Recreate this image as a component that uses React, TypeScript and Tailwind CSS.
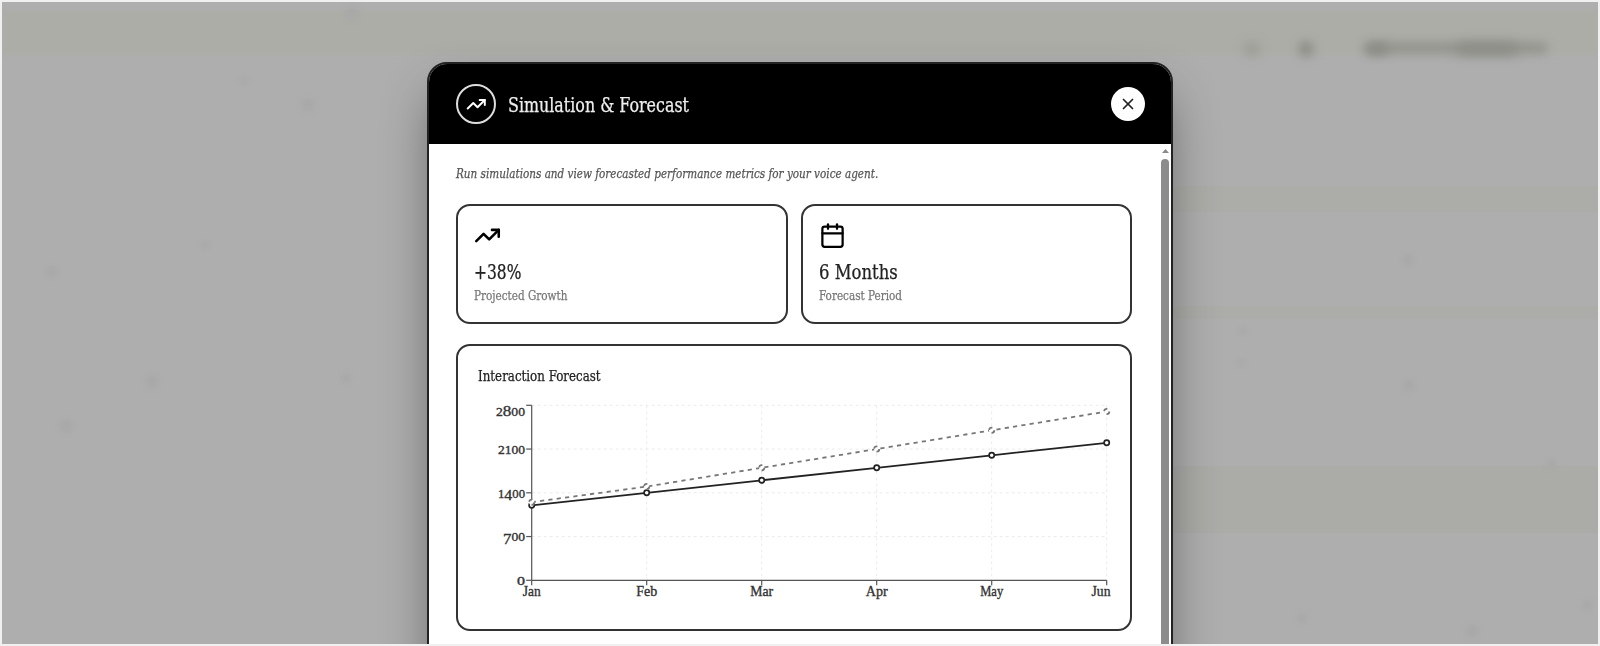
import type { ReactNode } from "react";
import { Calendar, TrendingUp, X } from "lucide-react";
import { clsx } from "clsx";

type Point = { month: string; current: number; projected: number };

const DATA: Point[] = [
  { month: "Jan", current: 1200, projected: 1250 },
  { month: "Feb", current: 1400, projected: 1500 },
  { month: "Mar", current: 1600, projected: 1800 },
  { month: "Apr", current: 1800, projected: 2100 },
  { month: "May", current: 2000, projected: 2400 },
  { month: "Jun", current: 2200, projected: 2700 },
];

const Y_TICKS = [
  { value: 0, width: 8 },
  { value: 700, width: 22 },
  { value: 1400, width: 27 },
  { value: 2100, width: 27 },
  { value: 2800, width: 29 },
];

const MONTH_WIDTHS = [18, 21, 23, 22, 23, 19];

const PLOT = { left: 53.7, right: 628.7, top: 10.3, bottom: 185.3 };

const xAt = (i: number) =>
  PLOT.left + (i * (PLOT.right - PLOT.left)) / (DATA.length - 1);
const yAt = (v: number) =>
  PLOT.bottom - (v / 2800) * (PLOT.bottom - PLOT.top);

const toPoints = (key: "current" | "projected") =>
  DATA.map((d, i) => `${xAt(i)},${yAt(d[key])}`).join(" ");

// Old-style figures: 0-2 sit at x-height, 4 and 7 hang below the baseline.
function OldStyleNumber({ value }: { value: number }) {
  let shift = 0;
  return (
    <>
      {String(value)
        .split("")
        .map((digit, i) => {
          const target = digit === "4" || digit === "7" ? 2.5 : 0;
          const dy = target - shift;
          shift = target;
          return (
            <tspan key={i} dy={dy} fontSize={"012".includes(digit) ? 12 : 15}>
              {digit}
            </tspan>
          );
        })}
    </>
  );
}

function ForecastChart() {
  return (
    <svg
      width="640"
      height="215"
      viewBox="0 0 640 215"
      className="block font-['Liberation_Serif',serif]"
    >
      <g stroke="#ececec" strokeDasharray="3 3">
        {Y_TICKS.map((t) => (
          <line key={t.value} x1={PLOT.left} x2={PLOT.right} y1={yAt(t.value)} y2={yAt(t.value)} />
        ))}
        {DATA.map((d, i) => (
          <line key={d.month} x1={xAt(i)} x2={xAt(i)} y1={PLOT.top} y2={PLOT.bottom} />
        ))}
      </g>

      <g stroke="#555" strokeWidth="1.2">
        <line x1={PLOT.left} x2={PLOT.left} y1={PLOT.top} y2={PLOT.bottom} />
        <line x1={PLOT.left} x2={PLOT.right} y1={PLOT.bottom} y2={PLOT.bottom} />
        {Y_TICKS.map((t) => (
          <line key={t.value} x1={PLOT.left - 5.5} x2={PLOT.left} y1={yAt(t.value)} y2={yAt(t.value)} />
        ))}
        {DATA.map((d, i) => (
          <line key={d.month} x1={xAt(i)} x2={xAt(i)} y1={PLOT.bottom} y2={PLOT.bottom + 5} />
        ))}
      </g>

      <g fill="#333" stroke="#333" strokeWidth="0.35">
        {Y_TICKS.map((t) => (
          <text
            key={t.value}
            x={47 - t.width}
            y={t.value === 2800 ? 21 : yAt(t.value) + 4.7}
            textLength={t.width}
            lengthAdjust="spacingAndGlyphs"
          >
            <OldStyleNumber value={t.value} />
          </text>
        ))}
        {DATA.map((d, i) => (
          <text
            key={d.month}
            x={i === 5 ? 613.5 : xAt(i) - MONTH_WIDTHS[i] / 2}
            y="201"
            fontSize="14.5"
            textLength={MONTH_WIDTHS[i]}
            lengthAdjust="spacingAndGlyphs"
          >
            {d.month}
          </text>
        ))}
      </g>

      <polyline points={toPoints("current")} fill="none" stroke="#222" strokeWidth="1.8" />
      {DATA.map((d, i) => (
        <circle key={d.month} cx={xAt(i)} cy={yAt(d.current)} r="2.6" fill="#fff" stroke="#222" strokeWidth="1.7" />
      ))}
      <g stroke="#777" strokeWidth="1.8" strokeDasharray="4.2 4.2">
        <polyline points={toPoints("projected")} fill="none" />
        {DATA.map((d, i) => (
          <circle key={d.month} cx={xAt(i)} cy={yAt(d.projected)} r="2.6" fill="#fff" />
        ))}
      </g>
    </svg>
  );
}

type StatProps = { icon: ReactNode; value: ReactNode; label: ReactNode };

function StatCard({ icon, value, label }: StatProps) {
  return (
    <div className="h-[120px] rounded-[14px] border-2 border-[#333] px-4 pt-4">
      {icon}
      <div className="mt-[9px]">{value}</div>
      <div className="-mt-px">{label}</div>
    </div>
  );
}

function Label({ className, children }: { className: string; children: ReactNode }) {
  return (
    <span
      className={clsx(
        "block w-max origin-left whitespace-nowrap [-webkit-text-stroke:0.25px_currentColor]",
        className,
      )}
    >
      {children}
    </span>
  );
}

// Page content behind the overlay, too blurred to read.
function Backdrop() {
  return (
    <>
      <div className="absolute inset-x-0 top-[9px] h-[43px] bg-[#acada6] blur-[2px]" />
      <div className="absolute top-[184px] right-0 left-[1170px] h-[26px] bg-[#acaca9]" />
      <div className="absolute top-[304px] right-0 left-[1170px] h-[13px] bg-[#acaca9]" />
      <div className="absolute top-[464px] right-0 left-[1170px] h-[67px] bg-[#ababa8]" />
      <div className="absolute top-[39px] left-[1241px] h-4 w-[18px] rounded-full bg-[#9fa099] blur-[5px]" />
      <div className="absolute top-[39px] left-[1296px] h-4 w-4 rounded-full bg-[#8e8f89] blur-[5px]" />
      <div className="absolute top-[40px] left-[1362px] h-3 w-[184px] rounded-full bg-[#94958f] blur-[5px]" />
      <div className="absolute top-[41px] left-[1364px] h-3 w-[22px] rounded-full bg-[#8c8d87] blur-[5px]" />
      <div className="absolute top-[41px] left-[1455px] h-3 w-[60px] rounded-full bg-[#8c8d87] blur-[6px]" />
      <svg width="1596" height="642" className="absolute inset-0 blur-[2px]" fill="#a9a9a9">
        <circle cx="350" cy="12" r="7" />
        <circle cx="242" cy="79" r="4" />
        <circle cx="306" cy="103" r="7" />
        <circle cx="203" cy="243" r="4" />
        <circle cx="50" cy="270" r="6" />
        <circle cx="150" cy="380" r="7" />
        <circle cx="344" cy="376" r="5" />
        <circle cx="64" cy="424" r="7" />
        <circle cx="1406" cy="258" r="6" />
        <circle cx="1241" cy="329" r="4" />
        <circle cx="1239" cy="361" r="4" />
        <circle cx="1407" cy="384" r="6" />
        <circle cx="1549" cy="462" r="5" />
        <circle cx="1300" cy="616" r="5" />
        <circle cx="1470" cy="629" r="7" />
        <circle cx="1585" cy="603" r="5" />
      </svg>
    </>
  );
}

export default function App() {
  return (
    <div className="relative h-[646px] w-[1600px] overflow-hidden border-2 border-[#f0f0f0] bg-[#aeaeae] font-['DejaVu_Serif_Condensed','DejaVu_Serif',serif]">
      <Backdrop />

      <div className="relative mx-auto mt-[60px] h-[760px] w-[746px] overflow-hidden rounded-[20px] border-2 border-[#222] bg-white shadow-[0_26px_52px_-8px_rgba(0,0,0,0.45)]">
        <header className="flex h-20 items-center bg-black pr-[26px] pl-[27px]">
          <div className="flex size-10 items-center justify-center rounded-full border-2 border-[#ddd] text-white">
            <TrendingUp size={20.5} strokeWidth={2.3} />
          </div>
          <h2 className="mt-0.5 ml-3 text-[20.5px] text-[#eee]">
            <Label className="scale-x-[0.862]">Simulation &amp; Forecast</Label>
          </h2>
          <button className="ml-auto flex size-[34px] items-center justify-center rounded-full bg-white text-[#222]">
            <X size={18} strokeWidth={2.3} />
          </button>
        </header>

        <div className="flex">
          <main className="w-[730px] pt-5 pl-[27px]">
            <p className="text-[13px] leading-5 text-[#555] italic">
              <Label className="scale-x-[0.892]">
                Run simulations and view forecasted performance metrics for your voice agent.
              </Label>
            </p>

            <div className="mt-5 grid w-[676px] grid-cols-2 gap-[13px]">
              <StatCard
                icon={<TrendingUp size={27} strokeWidth={2.3} className="text-black" />}
                value={<Label className="scale-x-[0.86] text-[20px] leading-7 text-[#222]">+38%</Label>}
                label={<Label className="scale-x-[0.86] text-[13.5px] leading-5 text-[#777]">Projected Growth</Label>}
              />
              <StatCard
                icon={<Calendar size={27} className="text-black" />}
                value={<Label className="scale-x-[0.915] text-[20px] leading-7 text-[#222]">6 Months</Label>}
                label={<Label className="scale-x-[0.86] text-[13.5px] leading-5 text-[#777]">Forecast Period</Label>}
              />
            </div>

            <section className="mt-5 h-[287px] w-[676px] rounded-[14px] border-2 border-[#333] pt-[18px] pl-5">
              <h3 className="text-[14.5px] leading-6 text-[#222]">
                <Label className="scale-x-[0.91]">Interaction Forecast</Label>
              </h3>
              <div className="mt-[7px] -ml-[0.5px]">
                <ForecastChart />
              </div>
            </section>
          </main>

          <div className="flex w-3 flex-col items-center pt-[5px]">
            <svg width="7" height="4" viewBox="0 0 7 4">
              <path d="M3.5 0 L7 4 H0 Z" fill="#8a8a8a" />
            </svg>
            <div className="mt-[6px] h-[600px] w-2 rounded-full bg-[#8c8c8c]" />
          </div>
        </div>
      </div>
    </div>
  );
}
